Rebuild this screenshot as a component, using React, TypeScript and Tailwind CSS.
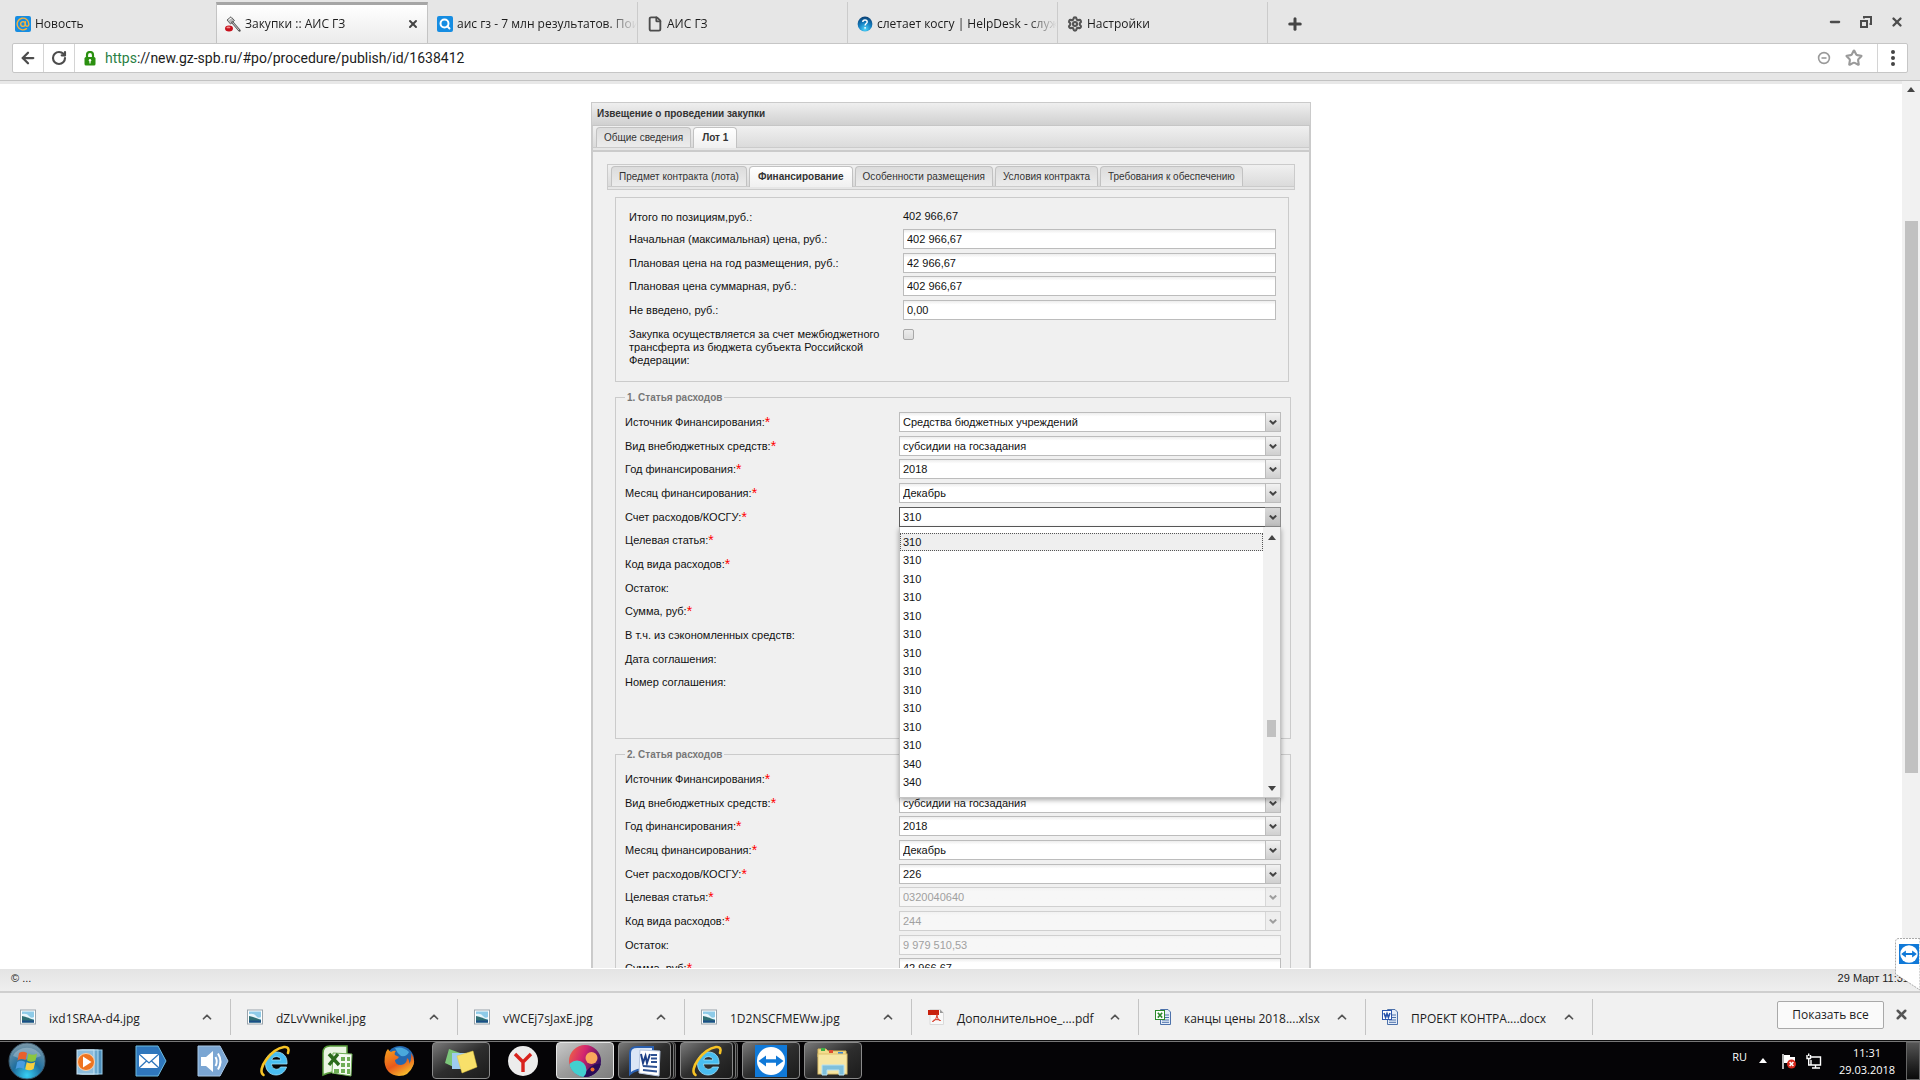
import { useState } from 'react';
import type { ReactNode } from 'react';
import { ArrowLeft, AtSign, ChevronUp, File, Minus, Plus, RotateCw, Search, Settings, Star, X } from 'lucide-react';

interface Field {
  id: string;
  label: string;
  required?: boolean;
  value?: string;
  kind?: 'select' | 'text';
  disabled?: boolean;
  open?: boolean;
}

const kosguOptions = ['310', '310', '310', '310', '310', '310', '310', '310', '310', '310', '310', '310', '340', '340'];

const priceFields: Field[] = [
  { id: 'max-price', label: 'Начальная (максимальная) цена, руб.:', value: '402 966,67' },
  { id: 'year-price', label: 'Плановая цена на год размещения, руб.:', value: '42 966,67' },
  { id: 'sum-price', label: 'Плановая цена суммарная, руб.:', value: '402 966,67' },
  { id: 'not-entered', label: 'Не введено, руб.:', value: '0,00' },
];

const firstArticle: Field[] = [
  { id: 'a1-source', label: 'Источник Финансирования:', required: true, kind: 'select', value: 'Средства бюджетных учреждений' },
  { id: 'a1-kind', label: 'Вид внебюджетных средств:', required: true, kind: 'select', value: 'субсидии на госзадания' },
  { id: 'a1-year', label: 'Год финансирования:', required: true, kind: 'select', value: '2018' },
  { id: 'a1-month', label: 'Месяц финансирования:', required: true, kind: 'select', value: 'Декабрь' },
  { id: 'a1-kosgu', label: 'Счет расходов/КОСГУ:', required: true, kind: 'select', value: '310', open: true },
  { id: 'a1-target', label: 'Целевая статья:', required: true },
  { id: 'a1-code', label: 'Код вида расходов:', required: true },
  { id: 'a1-rest', label: 'Остаток:' },
  { id: 'a1-sum', label: 'Сумма, руб:', required: true },
  { id: 'a1-saved', label: 'В т.ч. из сэкономленных средств:' },
  { id: 'a1-date', label: 'Дата соглашения:' },
  { id: 'a1-number', label: 'Номер соглашения:' },
];

const secondArticle: Field[] = [
  { id: 'a2-source', label: 'Источник Финансирования:', required: true },
  { id: 'a2-kind', label: 'Вид внебюджетных средств:', required: true, kind: 'select', value: 'субсидии на госзадания' },
  { id: 'a2-year', label: 'Год финансирования:', required: true, kind: 'select', value: '2018' },
  { id: 'a2-month', label: 'Месяц финансирования:', required: true, kind: 'select', value: 'Декабрь' },
  { id: 'a2-kosgu', label: 'Счет расходов/КОСГУ:', required: true, kind: 'select', value: '226' },
  { id: 'a2-target', label: 'Целевая статья:', required: true, kind: 'select', value: '0320040640', disabled: true },
  { id: 'a2-code', label: 'Код вида расходов:', required: true, kind: 'select', value: '244', disabled: true },
  { id: 'a2-rest', label: 'Остаток:', kind: 'text', value: '9 979 510,53', disabled: true },
  { id: 'a2-sum', label: 'Сумма, руб:', required: true, kind: 'text', value: '42 966,67' },
];

/* ---------- browser chrome ---------- */

function BrowserTab({ icon, title, active }: { icon: ReactNode; title: string; active?: boolean }) {
  return (
    <div
      className={
        active
          ? 'flex w-[212px] items-center border-x border-t-[3px] border-x-[#c4c4c4] border-t-[#a6a6a6] bg-gradient-to-b from-white to-[#ebebeb] pr-2 pl-2'
          : 'flex w-[210px] items-center border-r border-[#cbcbcb] pt-0.5 pl-[9px] first:border-transparent'
      }
    >
      <button className="flex min-w-0 flex-1 items-center gap-1 text-left">
        <span className="flex w-4 shrink-0 justify-center">{icon}</span>
        <span className="flex-1 overflow-hidden whitespace-nowrap [mask-image:linear-gradient(to_right,black_84%,transparent)]">{title}</span>
      </button>
      {active && (
        <button aria-label="Закрыть вкладку">
          <X className="size-3 text-[#444]" strokeWidth={4} />
        </button>
      )}
    </div>
  );
}

function GavelIcon() {
  return (
    <svg viewBox="0 0 16 16" className="size-4">
      <path d="M2 4 L6 0.8 L9.5 4.5 L5.5 8 Z" fill="#b9b9b9" stroke="#555" strokeWidth="0.9" />
      <path d="M3.5 4 L6.4 1.8" stroke="#fff" strokeWidth="1" />
      <path d="M7.5 6.5 L14.5 14.5" stroke="#555" strokeWidth="2.4" strokeLinecap="round" />
      <path d="M7.5 6.5 L14 14" stroke="#ccc" strokeWidth="1" />
      <ellipse cx="4" cy="12.4" rx="4" ry="3" fill="#c8101c" />
      <ellipse cx="3.4" cy="11.4" rx="2" ry="0.9" fill="#f08a8a" />
    </svg>
  );
}

function HelpBall() {
  return (
    <svg viewBox="0 0 16 16" className="size-4">
      <defs>
        <radialGradient id="help" cx="50%" cy="85%" r="85%">
          <stop offset="0" stopColor="#4fd6fb" />
          <stop offset="0.5" stopColor="#1582c4" />
          <stop offset="1" stopColor="#0b3f73" />
        </radialGradient>
      </defs>
      <circle cx="8" cy="8" r="7.4" fill="url(#help)" />
      <path d="M5.8 6 C5.8 3.3 10.2 3.3 10.2 6 C10.2 7.6 8.1 7.6 8.1 9.6" fill="none" stroke="#fff" strokeWidth="1.4" />
      <circle cx="8.1" cy="11.8" r="0.9" fill="#fff" />
    </svg>
  );
}

function BrowserHeader() {
  return (
    <header className="border-b border-[#c2c2c2] bg-[#e6e6e6] font-['Open_Sans','Noto_Sans',sans-serif] text-[#1c1c1c]">
      <div className="flex h-[43px] items-stretch pt-0.5 pl-1.5 text-xs">
        <BrowserTab
          title="Новость"
          icon={
            <span className="flex size-4 items-center justify-center rounded-xs bg-[#168de2]">
              <AtSign className="size-3.5 text-[#f5b23c]" strokeWidth={2.4} />
            </span>
          }
        />
        <BrowserTab title="Закупки :: АИС ГЗ" active icon={<GavelIcon />} />
        <BrowserTab
          title="аис гз - 7 млн результатов. Пои"
          icon={
            <span className="flex size-4 items-center justify-center rounded-xs bg-[#168de2]">
              <Search className="size-3 text-white" strokeWidth={4} />
            </span>
          }
        />
        <BrowserTab title="АИС ГЗ" icon={<File className="size-4 text-[#4c4c4c]" strokeWidth={2.8} />} />
        <BrowserTab title="слетает косгу | HelpDesk - служ" icon={<HelpBall />} />
        <BrowserTab title="Настройки" icon={<Settings className="size-4 text-[#555]" strokeWidth={3.2} />} />
        <button aria-label="Новая вкладка" className="ml-[18px] flex items-center pt-0.5">
          <Plus className="size-[18px] text-[#444]" strokeWidth={4} />
        </button>
        <div className="ml-auto flex items-center gap-[17px] pr-4 pb-px text-[#4c4c4c]">
          <button aria-label="Свернуть">
            <Minus className="size-3.5" strokeWidth={4} />
          </button>
          <button aria-label="Восстановить">
            <svg viewBox="0 0 14 14" className="size-3.5" fill="none" stroke="currentColor" strokeWidth="2">
              <path d="M2 6 H8 V12 H2 Z M5 3.5 V2 H12 V9 H10.5" />
            </svg>
          </button>
          <button aria-label="Закрыть">
            <X className="size-3.5" strokeWidth={4} />
          </button>
        </div>
      </div>
      <div className="px-3 pb-[7px]">
        <div className="flex h-[30px] items-stretch rounded-xs border border-[#c6c6c6] bg-white">
          <button aria-label="Назад" className="flex w-[31px] items-center justify-center border-r border-[#d4d4d4]">
            <ArrowLeft className="size-[18px] text-[#4c4c4c]" strokeWidth={3} />
          </button>
          <button aria-label="Обновить" className="flex w-[31px] items-center justify-center border-r border-[#d4d4d4]">
            <RotateCw className="size-4 text-[#4c4c4c]" strokeWidth={3.2} />
          </button>
          <div className="flex w-[30px] items-center justify-center">
            <svg viewBox="0 0 12 15" className="h-[15px] w-3">
              <path d="M3 7 V4 A3 3 0 0 1 9 4 V7" fill="none" stroke="#2b9010" strokeWidth="2.2" />
              <rect x="0.5" y="6" width="11" height="8.5" rx="1.5" fill="#2b9010" />
              <circle cx="6" cy="9.3" r="1.2" fill="#fff" />
              <path d="M6 9.5 V12.4" stroke="#fff" strokeWidth="1.2" />
            </svg>
          </div>
          <div className="flex flex-1 items-center font-[Roboto,sans-serif] text-sm">
            <span className="text-[#2a7f45]">https</span>
            <span>://new.gz-spb.ru/#po/procedure/publish/id/1638412</span>
          </div>
          <div className="flex items-center gap-3.5 pr-3.5 text-[#9a9a9a]">
            <svg viewBox="0 0 14 14" className="size-3.5" fill="none" stroke="currentColor" strokeWidth="1.6">
              <circle cx="7" cy="7" r="5.4" />
              <path d="M4.5 7 H9.5" />
            </svg>
            <Star className="size-[18px]" strokeWidth={2.8} />
          </div>
          <button aria-label="Меню" className="flex w-[30px] items-center justify-center border-l border-[#d4d4d4]">
            <svg viewBox="0 0 4 16" className="h-4 w-1" fill="#444">
              <circle cx="2" cy="2" r="2" />
              <circle cx="2" cy="8" r="2" />
              <circle cx="2" cy="14" r="2" />
            </svg>
          </button>
        </div>
      </div>
    </header>
  );
}

/* ---------- procurement form ---------- */

function TabStrip({ tabs, active, onSelect }: { tabs: string[]; active: number; onSelect: (i: number) => void }) {
  return (
    <div role="tablist" className="bg-[#e6e6e6] pb-0.5">
      <div className="flex items-start gap-0.5 border-b border-[#cbcbcb] bg-gradient-to-b from-[#f0f0f0] to-[#dbdbdb] pt-px pl-[3px]">
        {tabs.map((tab, i) => (
          <button
            key={tab}
            role="tab"
            aria-selected={i === active}
            onClick={() => onSelect(i)}
            className={
              i === active
                ? '-mb-px h-[21px] rounded-t-sm border border-b-0 border-[#c2c2c2] bg-gradient-to-b from-white to-[#f0f0f0] px-2 pb-px text-[10px] font-bold text-[#333]'
                : 'h-5 rounded-t-sm border border-b-0 border-[#c2c2c2] bg-gradient-to-b from-[#dcdcdc] to-[#ececec] px-[7px] text-[10px] text-[#333]'
            }
          >
            {tab}
          </button>
        ))}
      </div>
    </div>
  );
}

function OptionList({ options }: { options: string[] }) {
  return (
    <div className="absolute inset-x-0 top-5 z-10 flex border border-t-0 border-[#c4c4c4] bg-white pt-1.5 pb-[5px] shadow-[0_2px_5px_rgba(0,0,0,0.35)]">
      <ul role="listbox" className="flex-1">
        {options.map((option, i) => (
          <li
            key={i}
            role="option"
            aria-selected={i === 0}
            className={
              i === 0
                ? 'flex h-[18px] items-center border border-dotted border-[#555] bg-[#efefef] pl-0.5'
                : 'flex h-[19px] items-center pl-[3px] odd:h-[18px]'
            }
          >
            {option}
          </li>
        ))}
      </ul>
      <div className="-mt-1.5 -mb-[5px] flex w-[17px] flex-col items-center bg-[#f1f1f1] pt-2 pb-1.5">
        <svg viewBox="0 0 8 5" className="h-[5px] w-2"><path d="M0 5 L4 0 L8 5 Z" fill="#444" /></svg>
        <div className="flex-[11]" />
        <div className="h-[17px] w-[9px] bg-[#c1c1c1]" />
        <div className="flex-[3]" />
        <svg viewBox="0 0 8 5" className="h-[5px] w-2"><path d="M0 0 L4 5 L8 0 Z" fill="#444" /></svg>
      </div>
    </div>
  );
}

const inputClass =
  'block h-5 w-full border border-[#bcbcbc] bg-white bg-gradient-to-b from-[#ededed] to-white to-20% pr-1 pl-[3px] outline-none disabled:border-[#d0d0d0] disabled:from-[#f2f2f2] disabled:to-[#f7f7f7] disabled:text-[#a0a0a0] disabled:opacity-100';

function Control({ field }: { field: Field }) {
  if (field.kind === 'select') {
    return (
      <div className="relative">
        <select
          id={field.id}
          disabled={field.disabled}
          className={field.open ? 'block h-5 w-full appearance-none border border-[#5c5c5c] bg-white pl-[3px] outline-none' : `${inputClass} appearance-none`}
        >
          <option>{field.value}</option>
        </select>
        <span
          className={
            field.open
              ? 'pointer-events-none absolute inset-y-0 right-0 flex w-4 items-center justify-center border border-l-0 border-[#8c8c8c] bg-gradient-to-b from-[#d8d8d8] to-[#bdbdbd]'
              : field.disabled
                ? 'pointer-events-none absolute inset-y-0 right-0 flex w-4 items-center justify-center border border-[#d0d0d0] bg-[#ececec] opacity-80'
                : 'pointer-events-none absolute inset-y-0 right-0 flex w-4 items-center justify-center border border-[#bcbcbc] bg-gradient-to-b from-[#f2f2f2] to-[#cfcfcf]'
          }
        >
          <svg viewBox="0 0 8 5" className="h-[5px] w-2" fill="none" stroke={field.disabled ? '#888' : '#444'} strokeWidth="2">
            <path d="M0.8 0.6 L4 3.6 L7.2 0.6" />
          </svg>
        </span>
        {field.open && <OptionList options={kosguOptions} />}
      </div>
    );
  }
  return <input id={field.id} type="text" defaultValue={field.value} disabled={field.disabled} className={inputClass} />;
}

function FieldRow({ field }: { field: Field }) {
  return (
    <div className="grid h-6 grid-cols-[274px_1fr] items-start nth-[3n]:h-[23px]">
      <label htmlFor={field.id} className="flex h-5 items-center">
        {field.label}
        {field.required && <span className="text-sm leading-3 text-[#f00]">*</span>}
      </label>
      {field.value !== undefined && <Control field={field} />}
    </div>
  );
}

function ArticleFieldset({ title, fields }: { title: string; fields: Field[] }) {
  return (
    <fieldset className="border border-[#cbcbcb] px-[9px] pt-2 pb-[42px]">
      <legend className="px-0.5 text-[10px] leading-[13px] font-bold text-[#777]">{title}</legend>
      {fields.map((field) => (
        <FieldRow key={field.id} field={field} />
      ))}
    </fieldset>
  );
}

function ProcurementPanel() {
  const [page, setPage] = useState(1);
  const [section, setSection] = useState(1);

  return (
    <section className="mx-auto w-full max-w-[720px] border border-b-0 border-[#cacaca] bg-[#f0f0f0] text-[11px] text-[#111]">
      <h1 className="border-b border-[#c6c6c6] bg-gradient-to-b from-[#efefef] to-[#d0d0d0] px-[5px] text-[10px] leading-[22px] font-bold text-[#333]">
        Извещение о проведении закупки
      </h1>
      <div className="border-x border-b-2 border-[#cbcbcb]">
        <TabStrip tabs={['Общие сведения', 'Лот 1']} active={page} onSelect={setPage} />
      </div>
      <div className="border-x border-[#cbcbcb] px-3.5 pt-3">
        <div className="border border-[#cbcbcb]">
          <TabStrip
            tabs={['Предмет контракта (лота)', 'Финансирование', 'Особенности размещения', 'Условия контракта', 'Требования к обеспечению']}
            active={section}
            onSelect={setSection}
          />
        </div>
        <div className="mt-[7px] mr-1.5 ml-2 border border-[#cbcbcb] pt-[7px] pr-3 pb-3.5 pl-[13px]">
          <div className="grid h-6 grid-cols-[274px_1fr]">
            <span className="leading-6">Итого по позициям,руб.:</span>
            <span className="leading-[22px]">402 966,67</span>
          </div>
          {priceFields.map((field) => (
            <FieldRow key={field.id} field={field} />
          ))}
          <div className="grid grid-cols-[274px_1fr] pt-1">
            <label htmlFor="transfer" className="pr-5 leading-[13px]">
              Закупка осуществляется за счет межбюджетного трансферта из бюджета субъекта Российской Федерации:
            </label>
            <input
              id="transfer"
              type="checkbox"
              className="mt-px size-[11px] appearance-none rounded-xs border border-[#a8a8a8] bg-gradient-to-b from-[#ececec] to-[#dcdcdc]"
            />
          </div>
        </div>
        <div className="mt-[9px] mr-1 ml-2 flex flex-col gap-[9px]">
          <ArticleFieldset title="1. Статья расходов" fields={firstArticle} />
          <ArticleFieldset title="2. Статья расходов" fields={secondArticle} />
        </div>
      </div>
    </section>
  );
}

function PageScrollbar() {
  return (
    <div className="flex w-[18px] flex-col items-center bg-[#f1f1f1] pt-1.5">
      <svg viewBox="0 0 8 5" className="h-[5px] w-2"><path d="M0 5 L4 0 L8 5 Z" fill="#444" /></svg>
      <div className="flex-[129]" />
      <div className="w-[13px] flex-[551] bg-[#c1c1c1]" />
      <div className="flex-[195]" />
    </div>
  );
}

function TeamViewerGlyph({ className }: { className: string }) {
  return (
    <svg viewBox="0 0 32 32" className={className}>
      <rect width="32" height="32" fill="#1079d8" />
      <circle cx="16" cy="16" r="14" fill="#fff" />
      <path d="M3.5 16 L11 10.5 V14.3 H21 V10.5 L28.5 16 L21 21.5 V17.7 H11 V21.5 Z" fill="#1079d8" />
    </svg>
  );
}

function StatusBar() {
  return (
    <div className="relative flex h-[25px] items-start justify-between border-t border-b-2 border-t-white border-b-[#cfcfcf] bg-gradient-to-b from-[#e4e4e4] to-[#efefef] pt-px pr-[11px] pl-[11px] text-[11px] text-[#222]">
      <span>© ...</span>
      <span>29 Март 11:31</span>
      <div className="absolute right-0 bottom-0 h-[53px] w-[25px]">
        <svg viewBox="0 0 25 53" className="absolute size-full">
          <path d="M25 0.5 H4 Q0.5 0.5 0.5 4 V36 L25 52 Z" fill="#fff" stroke="#aaa" strokeDasharray="2 1" />
        </svg>
        <TeamViewerGlyph className="absolute top-1.5 right-px size-5" />
      </div>
    </div>
  );
}

/* ---------- downloads ---------- */

function ImageFileIcon() {
  return (
    <svg viewBox="0 0 16 16" className="size-4">
      <rect x="0.5" y="1" width="15" height="14" fill="#fff" stroke="#9aa4ab" />
      <rect x="2" y="2.5" width="12" height="11" fill="#8ecbe8" />
      <path d="M2 5 Q7 4 9 7 T14 8 V10 H2 Z" fill="#e8f6fb" />
      <path d="M2 7 Q7 8 14 11 V13.5 H2 Z" fill="#2f6f74" />
      <path d="M2 11.5 H14 V13.5 H2 Z" fill="#1b4e87" />
    </svg>
  );
}

function PdfFileIcon() {
  return (
    <svg viewBox="0 0 16 16" className="size-4">
      <path d="M2 0.5 H12 L15.5 4 V15.5 H2 Z" fill="#f8f8f8" stroke="#dadada" />
      <path d="M12 0.5 L15.5 4 H12 Z" fill="#999" />
      <rect x="0" y="1" width="11" height="5" fill="#c8200c" />
      <path d="M9 5 C9 9 6 13 4.5 12.5 C5 10.5 10 10 12.5 11.5 C11 12 9 9 9 5" fill="none" stroke="#d8301c" strokeWidth="1" />
    </svg>
  );
}

function OfficeFileIcon({ app }: { app: 'excel' | 'word' }) {
  const color = app === 'excel' ? '#2d8a2d' : '#2a55ac';
  return (
    <svg viewBox="0 0 16 16" className="size-4">
      <path d="M5.5 0.5 H13 L15.5 3 V15.5 H5.5 Z" fill="#e4ecf8" stroke="#4d72ab" />
      <path d="M10 6 H14 M10 8.5 H14 M7 11 H14 M7 13.3 H14" stroke="#4d72ab" />
      <rect x="0.5" y="1.5" width="9" height="9" fill="#fff" stroke={color} />
      <path
        d={app === 'excel' ? 'M2.8 3.8 L7.2 8.6 M7.2 3.8 L2.8 8.6' : 'M2 4 L3.6 8.4 L5 4.6 L6.4 8.4 L8 4'}
        fill="none"
        stroke={color}
        strokeWidth="1.6"
      />
    </svg>
  );
}

const downloads: { name: string; icon: ReactNode }[] = [
  { name: 'ixd1SRAA-d4.jpg', icon: <ImageFileIcon /> },
  { name: 'dZLvVwnikeI.jpg', icon: <ImageFileIcon /> },
  { name: 'vWCEj7sJaxE.jpg', icon: <ImageFileIcon /> },
  { name: '1D2NSCFMEWw.jpg', icon: <ImageFileIcon /> },
  { name: 'Дополнительное_....pdf', icon: <PdfFileIcon /> },
  { name: 'канцы цены 2018....xlsx', icon: <OfficeFileIcon app="excel" /> },
  { name: 'ПРОЕКТ КОНТРА....docx', icon: <OfficeFileIcon app="word" /> },
];

function DownloadsBar() {
  return (
    <div className="flex h-[47px] items-center bg-[#f1f1f1] pr-[11px] pl-1 font-['Open_Sans','Noto_Sans',sans-serif] text-xs text-[#1c1c1c]">
      {downloads.map((file) => (
        <div key={file.name} className="flex h-9 w-[227px] items-center border-r border-[#c4c4c4] pr-4 pl-4">
          <button className="flex flex-1 items-center gap-[13px] whitespace-nowrap">
            {file.icon}
            <span className="pt-1">{file.name}</span>
          </button>
          <button aria-label={`Действия: ${file.name}`}>
            <ChevronUp className="size-3.5 text-[#555]" strokeWidth={3} />
          </button>
        </div>
      ))}
      <button className="mb-1 ml-auto h-7 w-[107px] rounded-xs border border-[#a9a9a9] bg-[#fafafa]">Показать все</button>
      <button aria-label="Закрыть панель" className="mb-1 ml-2.5">
        <X className="size-[15px] text-[#555]" strokeWidth={4} />
      </button>
    </div>
  );
}

/* ---------- taskbar ---------- */

function StartOrb() {
  return (
    <svg viewBox="0 0 38 38" className="size-[38px]">
      <defs>
        <radialGradient id="orb" cx="50%" cy="90%" r="90%">
          <stop offset="0" stopColor="#37d0f4" />
          <stop offset="0.45" stopColor="#1f6f9f" />
          <stop offset="1" stopColor="#7d99a8" />
        </radialGradient>
      </defs>
      <circle cx="19" cy="19" r="18" fill="url(#orb)" stroke="#39566a" />
      <path d="M5 14 A15 13 0 0 1 33 14 Q19 21 5 14" fill="#fff" opacity="0.25" />
      <path d="M11 11 Q15 8.5 19 11 L17.5 18 Q13.5 16 9.5 18.5 Z" fill="#e8602c" />
      <path d="M20.5 11.5 Q25 14 29 11.5 L27.5 18.5 Q23.5 21 19 18.5 Z" fill="#8cc63e" />
      <path d="M9.2 20 Q13 17.5 17.2 20 L15.7 27 Q12 24.5 7.7 27 Z" fill="#4a9ce0" />
      <path d="M18.7 20.2 Q23 22.5 27.2 20 L25.6 27 Q21.5 29.5 17.2 27.2 Z" fill="#f8cf3e" />
    </svg>
  );
}

function MediaPlayerIcon() {
  return (
    <svg viewBox="0 0 28 28" className="size-7">
      <rect x="7" y="3" width="20" height="24" fill="#4c8db9" stroke="#9fd0ec" />
      <rect x="5" y="3" width="18" height="24" fill="#6ba9cf" stroke="#b5dcf1" />
      <rect x="2" y="3" width="17" height="24" fill="#8cbcdc" stroke="#cde6f4" />
      <circle cx="11" cy="15" r="8.5" fill="#ee7420" stroke="#fcd2ac" />
      <path d="M8 9.5 L16.5 15 L8 20.5 Z" fill="#fff" />
    </svg>
  );
}

function MailIcon() {
  return (
    <svg viewBox="0 0 32 32" className="size-8">
      <path d="M1 1 H23 L31 16 L23 31 H1 Z" fill="#2f77bd" stroke="#6dbbe0" />
      <rect x="4" y="9" width="20" height="14" fill="#fff" />
      <path d="M4 9 L14 18 L24 9 M4 23 L11.5 16 M24 23 L16.5 16" fill="none" stroke="#2f77bd" strokeWidth="1.3" />
    </svg>
  );
}

function SoundIcon() {
  return (
    <svg viewBox="0 0 32 32" className="size-8">
      <path d="M1 1 H23 L31 16 L23 31 H1 Z" fill="#7ba6d3" stroke="#a9c7e4" />
      <path d="M4 12 H9 L16 6 V27 L9 21 H4 Z" fill="#fff" />
      <path d="M18.5 12 Q21 16.5 18.5 21 M21 8.5 Q26 16.5 21 24.5" fill="none" stroke="#fff" strokeWidth="2" />
    </svg>
  );
}

function ExplorerIcon() {
  return (
    <svg viewBox="0 0 32 32" className="size-8">
      <path
        d="M28 19 H12.5 C12.5 24.5 19.5 26 21.5 22 H27.6 C25.5 28 21 30 17 30 C10.5 30 6.5 25 6.5 18.5 C6.5 11.5 11 7 17.2 7 C24.5 7 28.6 12 28 19 Z M12.8 15 H21.8 C21.5 10.5 13.4 10.5 12.8 15 Z"
        fill="#49bdf0"
        stroke="#9fe2fb"
        strokeWidth="0.8"
      />
      <path d="M4.5 30 C-3 25 12 4 25 2 C29 1.5 30.5 4 29 8" fill="none" stroke="#f7c325" strokeWidth="2.6" strokeLinecap="round" />
    </svg>
  );
}

function ExcelIcon() {
  return (
    <svg viewBox="0 0 32 32" className="size-8">
      <path d="M2 30 V8 Q2 1 9 1 H26 V26 Q10 26 2 30 Z" fill="#eaf5e2" stroke="#5a9e3c" strokeWidth="1.5" />
      <path d="M12 8 L31 9 L30 31 L11 28 Z" fill="#f6fbf3" stroke="#6fae56" />
      <path d="M20 12 H24 V16 H20 Z M26 12 H29 V16 H26 Z M20 18 H24 V22 H20 Z M26 18 H29 V22 H26 Z M13 24 H18 V28 H13 Z M20 24 H24 V28 H20 Z M26 24 H29 V29 H26 Z" fill="#6fae56" />
      <path d="M8 9 L18 20 M17 9 L8 20" stroke="#2c6b1c" strokeWidth="3.4" />
    </svg>
  );
}

function FirefoxIcon() {
  return (
    <svg viewBox="0 0 32 32" className="size-8">
      <defs>
        <linearGradient id="fox" x1="0" y1="0" x2="0.6" y2="1">
          <stop offset="0" stopColor="#f6a21c" />
          <stop offset="0.6" stopColor="#e8591b" />
          <stop offset="1" stopColor="#f7b92c" />
        </linearGradient>
      </defs>
      <circle cx="17" cy="15" r="14" fill="#2468b0" />
      <path d="M12 3 Q20 1 26 7 Q24 12 18 11 Q14 8 12 3" fill="#4aa8dc" />
      <path
        d="M3 7 Q4 5 5 4 Q6 6 8 7 Q11 5 13 6 Q11 8 12 10 L16 12 Q15 14 12 15 Q12 20 18 20 Q24 19 24 13 Q27 15 26 19 Q29 15 28 8 Q33 15 30 21 Q26 31 16 31 Q3 30 1.5 17 Q1.5 11 3 7"
        fill="url(#fox)"
      />
    </svg>
  );
}

function NotesIcon() {
  return (
    <svg viewBox="0 0 34 28" className="h-7 w-[34px]">
      <path d="M5 2 L19 7 L14 22 L1 16 Z" fill="#7cc67a" />
      <path d="M8 6 L22 6 L22 22 L8 22 Z" fill="#9ecbf0" />
      <path d="M13 9 L29 4 L33 20 L18 26 Z" fill="#f8e06a" stroke="#e6c840" strokeWidth="0.5" />
    </svg>
  );
}

function YandexIcon() {
  return (
    <svg viewBox="0 0 32 32" className="size-8">
      <circle cx="16" cy="16" r="15" fill="#ececec" />
      <path d="M8 9 L16 17 L24 9 M16 17 V27" fill="none" stroke="#d9221c" strokeWidth="3.4" />
    </svg>
  );
}

function AmigoIcon() {
  return (
    <svg viewBox="0 0 34 34" className="size-[34px]">
      <defs>
        <linearGradient id="amigo" x1="0" y1="0" x2="1" y2="0.4">
          <stop offset="0" stopColor="#f5703c" />
          <stop offset="0.5" stopColor="#d4256f" />
          <stop offset="1" stopColor="#3b1264" />
        </linearGradient>
        <clipPath id="amigo-ball"><circle cx="17" cy="17" r="16" /></clipPath>
      </defs>
      <g clipPath="url(#amigo-ball)">
        <rect width="34" height="34" fill="url(#amigo)" />
        <path d="M14 34 Q22 18 34 20 V34 Z" fill="#2a0c58" />
        <circle cx="9" cy="26" r="9.5" fill="#43cfcf" />
        <circle cx="23.5" cy="14" r="6" fill="#fba85c" />
        <circle cx="24.5" cy="25.5" r="2" fill="#f0702c" />
      </g>
    </svg>
  );
}

function WordIcon() {
  return (
    <svg viewBox="0 0 32 32" className="size-8">
      <path d="M1 29 V8 Q1 2 8 2 H24 V24 Q8 23 1 29 Z" fill="#dbe6f6" stroke="#2b5fae" strokeWidth="2" />
      <path d="M11 5 L31 6 L30 31 L10 28 Z" fill="#fff" stroke="#b6c6e0" />
      <path d="M22 10 H28 M22 13.5 H28 M22 17 H28 M14 21 L28 22 M14 25 L28 26.5" stroke="#2d5192" strokeWidth="1.8" />
      <path d="M12 9 L14 18 L16.5 11 L18 18 L21 9" fill="none" stroke="#1d3f86" strokeWidth="2" />
    </svg>
  );
}

function FolderIcon() {
  return (
    <svg viewBox="0 0 34 32" className="h-8 w-[34px]">
      <path d="M2 4 H10 L12 6 H30 V12 H2 Z" fill="#f3dc8c" stroke="#d9b85a" />
      <rect x="5" y="3" width="4" height="3" fill="#3cae46" />
      <rect x="13" y="5" width="4" height="3" fill="#e04c30" />
      <rect x="22" y="7" width="5" height="3" fill="#3a86d4" />
      <rect x="2" y="9" width="29" height="20" fill="#f6e6a4" stroke="#ddc06c" />
      <path d="M6 30 V20 H28 V30 H23 V25 H11 V30 Z" fill="#7fc0dc" stroke="#b9e2f2" />
    </svg>
  );
}

type TaskFrame = 'none' | 'open' | 'active' | 'stack';

const taskItems: { name: string; icon: ReactNode; frame: TaskFrame }[] = [
  { name: 'Проигрыватель', icon: <MediaPlayerIcon />, frame: 'none' },
  { name: 'Почта', icon: <MailIcon />, frame: 'none' },
  { name: 'Звук', icon: <SoundIcon />, frame: 'none' },
  { name: 'Internet Explorer', icon: <ExplorerIcon />, frame: 'none' },
  { name: 'Excel', icon: <ExcelIcon />, frame: 'none' },
  { name: 'Firefox', icon: <FirefoxIcon />, frame: 'none' },
  { name: 'Записки', icon: <NotesIcon />, frame: 'open' },
  { name: 'Яндекс', icon: <YandexIcon />, frame: 'none' },
  { name: 'Браузер', icon: <AmigoIcon />, frame: 'active' },
  { name: 'Word', icon: <WordIcon />, frame: 'stack' },
  { name: 'Internet Explorer, окна', icon: <ExplorerIcon />, frame: 'stack' },
  { name: 'TeamViewer', icon: <TeamViewerGlyph className="size-8" />, frame: 'open' },
  { name: 'Проводник', icon: <FolderIcon />, frame: 'open' },
];

const frameClasses: Record<TaskFrame, string> = {
  none: 'flex size-full items-center justify-center',
  open: 'flex size-full items-center justify-center rounded-sm border border-[#8a8a8a] bg-gradient-to-br from-[#7a7a7a] via-[#2e2e2e] to-[#1b1b1b]',
  active: 'flex size-full items-center justify-center rounded-sm border border-[#e6e6e6] bg-gradient-to-br from-[#c9c9c9] via-[#9a9a9a] to-[#7d7d7d]',
  stack:
    'flex h-full w-[53px] items-center justify-center rounded-sm border border-[#8a8a8a] bg-gradient-to-br from-[#7a7a7a] via-[#2e2e2e] to-[#1b1b1b] shadow-[2px_0_0_#111,3px_0_0_#777,4px_0_0_#222,5px_0_0_#666]',
};

function Taskbar() {
  return (
    <footer className="flex h-10 items-stretch border-t border-[#111] bg-[#050406] font-['Open_Sans','Noto_Sans',sans-serif] text-[11px] text-white shadow-[inset_0_1px_0_#777]">
      <button aria-label="Пуск" className="flex w-[57px] items-center justify-center pr-[3px]">
        <StartOrb />
      </button>
      {taskItems.map((item) => (
        <button key={item.name} aria-label={item.name} className="w-[62px] py-px pr-px pl-[3px]">
          <span className={frameClasses[item.frame]}>{item.icon}</span>
        </button>
      ))}
      <div className="ml-auto flex items-center">
        <span className="pr-3 pb-1.5">RU</span>
        <svg viewBox="0 0 8 5" className="mr-[15px] h-[5px] w-2"><path d="M0 5 L4 0 L8 5 Z" fill="#fff" /></svg>
        <svg viewBox="0 0 14 16" className="mr-2.5 h-4 w-3.5">
          <path d="M1 1 V16" stroke="#fff" strokeWidth="1.4" />
          <path d="M2 2 H8 V4 H13 V10 H2 Z" fill="#fff" />
          <circle cx="9.5" cy="11" r="4.5" fill="#d8281c" />
          <path d="M7.6 9 L11.4 13 M11.4 9 L7.6 13" stroke="#fff" strokeWidth="1.6" />
        </svg>
        <svg viewBox="0 0 16 16" className="mr-[17px] size-4" fill="none" stroke="#fff" strokeWidth="1.4">
          <path d="M5 4 H14.5 V12 H5 V7 M9.5 12 V15 M6 15 H14 M1 2 V5.5 H4.5 V2 M2.7 0.5 V3 M2.7 6 V12 H5" />
        </svg>
        <div className="w-[56px] text-center leading-[17px]">
          <div>11:31</div>
          <div>29.03.2018</div>
        </div>
        <button aria-label="Свернуть все окна" className="ml-[11px] h-[38px] w-3.5 border border-[#666] bg-gradient-to-b from-[#555] to-[#0a0a0a]" />
      </div>
    </footer>
  );
}

export default function App() {
  return (
    <div className="flex h-screen flex-col overflow-hidden bg-white font-['Liberation_Sans',Arial,sans-serif]">
      <BrowserHeader />
      <div className="flex min-h-0 flex-1">
        <main className="flex-1 overflow-hidden border-t-[3px] border-[#e8e8e8] pt-[18px]">
          <ProcurementPanel />
        </main>
        <PageScrollbar />
      </div>
      <StatusBar />
      <DownloadsBar />
      <Taskbar />
    </div>
  );
}
